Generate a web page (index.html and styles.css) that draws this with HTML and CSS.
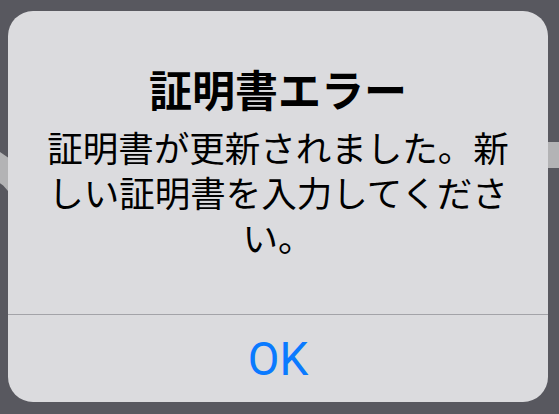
FILE: index.html
```html
<!DOCTYPE html>
<html lang="ja">

<head>
    <meta charset="UTF-8" />
    <title>証明書エラー</title>
    <link rel="stylesheet" href="styles.css">
</head>

<body>
    <div class="backdrop">
        <div class="peek peek-left"></div>
        <div class="peek peek-right"></div>

        <div class="alert">
            <div class="alert-content">
                <h2 class="alert-title">証明書エラー</h2>
                <div class="alert-message">
                    <div class="line">証明書が更新されました。新</div>
                    <div class="line">しい証明書を入力してくださ</div>
                    <div class="line">い。</div>
                </div>
            </div>
            <button class="alert-button">OK</button>
        </div>
    </div>
</body>

</html>
```

FILE: styles.css
```css
:root {
    --backdrop: #58585f;
    --card: #dbdbde;
    --peek: #b3b3b5;
    --divider: #a3a3a8;
    --text-color: #000000;
    --ios-blue: #0a7aff;
}

html,
body {
    margin: 0;
    padding: 0;
}

body {
    font-family: "Noto Sans CJK JP", "Noto Sans", sans-serif;
    background: var(--backdrop);
    color: var(--text-color);
}

.backdrop {
    position: relative;
    width: 559px;
    height: 414px;
    padding: 11px 11px 12px 8px;
    box-sizing: border-box;
    overflow: hidden;
}

/* bits of the screen behind the alert */
.peek {
    position: absolute;
    background: var(--peek);
}

.peek-left {
    left: 0;
    top: 152px;
    width: 8px;
    height: 39px;
    clip-path: polygon(0 0, 100% 14%, 100% 100%, 40% 86%, 0 80%);
}

.peek-right {
    right: 0;
    top: 142px;
    width: 11px;
    height: 26px;
}

.alert {
    position: relative;
    display: flex;
    flex-direction: column;
    height: 100%;
    background: var(--card);
    border-radius: 25px;
    overflow: hidden;
}

.alert-content {
    flex: 1;
    display: flex;
    flex-direction: column;
    align-items: center;
    padding: 51px 30px 0;
    border-bottom: 1px solid var(--divider);
}

.alert-title {
    margin: 0;
    font-size: 43px;
    line-height: 52px;
    font-weight: 700;
    text-align: center;
}

.alert-message {
    display: flex;
    flex-direction: column;
    align-items: center;
    margin-top: 10px;
    font-size: 35.5px;
    font-weight: 400;
}

.alert-message .line {
    height: 45px;
    line-height: 45px;
    white-space: nowrap;
}

.alert-button {
    height: 87px;
    border: none;
    background: transparent;
    color: var(--ios-blue);
    font-family: Roboto, "Liberation Sans", sans-serif;
    font-size: 46px;
    font-weight: 400;
    padding: 0;
    cursor: pointer;
}
```
